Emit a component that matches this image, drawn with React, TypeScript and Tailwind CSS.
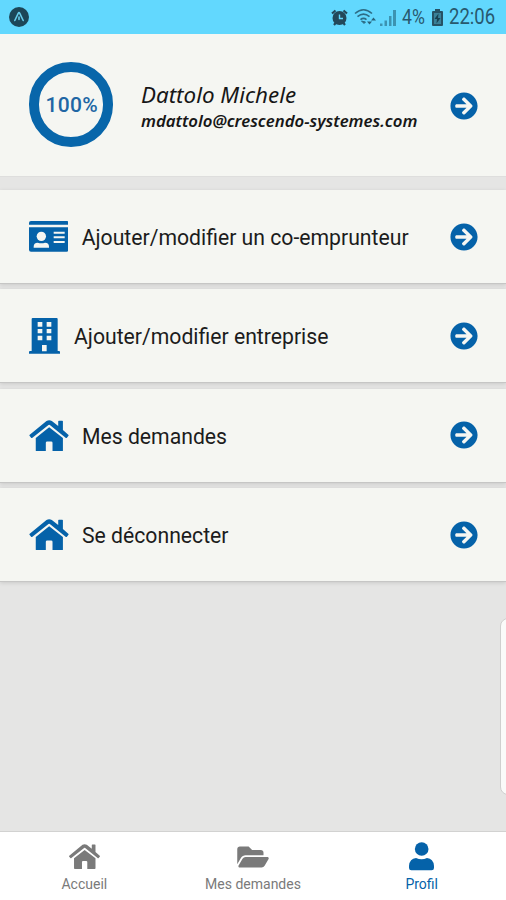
import type { ReactNode } from "react";
import { FaArrowCircleRight, FaFolderOpen } from "react-icons/fa";

function HomeIcon({ className }: { className: string }) {
  return (
    <svg className={className} viewBox="0 0 117 94" fill="currentColor">
      <path d="M1 44 51 3q8-5 16 0l19 15V4q0-2 2-2h10q2 0 2 2v26l16 14q2 2 0 4l-4 5q-2 2-4 0L61 15q-2-2-4 0L9 53q-2 2-4 0l-4-5q-2-2 0-4z" />
      <path d="M19 54 59 22l41 32v37q0 3-3 3H69V68q0-4-4-4H53q-4 0-4 4v26H22q-3 0-3-3z" />
    </svg>
  );
}

function UserIcon() {
  return (
    <svg className="h-[28.3px] w-[25px]" viewBox="0 0 75 85" fill="currentColor">
      <circle cx="38" cy="21" r="20.500" />
      <path d="M0 78V71Q2 50 21 48 38 55 54 48 73 50 75 71v7q0 7-7 7H7q-7 0-7-7z" />
    </svg>
  );
}

function IdCardIcon() {
  return (
    <svg className="h-[30.7px] w-[39.7px]" viewBox="0 0 119 92">
      <path d="M0 11V6q0-6 6-6h107q6 0 6 6v5z" fill="#0562a9" />
      <path d="M0 19h119v67q0 6-6 6H6q-6 0-6-6z" fill="#0562a9" />
      <circle cx="37" cy="46" r="14" fill="#f5f6f2" />
      <path d="M14 80v-3q0-12 12-12 11 4 22 0 12 0 12 12v3zM74 32h33v6H74zM74 46h33v6H74zM74 60h33v6H74z" fill="#f5f6f2" />
    </svg>
  );
}

function BuildingIcon() {
  return (
    <svg className="h-[35.7px] w-[31px]" viewBox="0 0 93 107">
      <path d="M8 3q0-3 3-3h72q3 0 3 3v96h4q3 0 3 3v5H0v-5q0-3 3-3h5z" fill="#0562a9" />
      <path d="M26 12h14v14H26zM53 12h14v14H53zM26 33h14v13H26zM53 33h14v13H53zM26 53h14v14H26zM53 53h14v14H53zM39 81h14v19H39z" fill="#f5f6f2" />
    </svg>
  );
}

function StatusBar() {
  return (
    <header className="flex h-[34px] shrink-0 items-center bg-[#62d8fe] pl-[9px] pr-[10px] text-[#28596e]">
      <svg className="size-5" viewBox="0 0 20 20">
        <circle cx="10" cy="10" r="10" fill="#1c4658" />
        <path d="M5.800 13.500 9.200 6.300q.8-1.300 1.600 0l3.400 7.200M10 10v2.500" fill="none" stroke="#66cbea" strokeWidth="1.600" strokeLinecap="round" />
      </svg>
      <svg className="ml-auto size-[17px]" viewBox="0 0 17 17">
        <circle cx="8.500" cy="9" r="7" fill="#23485a" />
        <path d="M1 4.500 4.500 1.500M16 4.500l-3.500-3M3 16l2-2.500M14 16l-2-2.500" stroke="#23485a" strokeWidth="2.200" />
        <path d="M8.500 5.500v4H12" fill="none" stroke="#62d8fe" strokeWidth="1.400" />
      </svg>
      <svg className="ml-[6px] h-[18px] w-[23px]" viewBox="0 0 23 18" fill="none" stroke="#2d6c85" strokeWidth="1.600">
        <path d="M1 5.500q8.500-7.500 17 0M3.500 8.700q6-5 12 0M6.500 11.700q3-2.500 6 0" />
        <path d="m7.500 13 2.500 2.500 1.500-1.500z" fill="#2d6c85" strokeWidth="1" />
        <path d="m13 13.500 2.500 3 2.500-3zM17 12.500l2.500-3 2.500 3z" fill="#28627a" stroke="none" />
      </svg>
      <svg className="ml-[3px] h-[17px] w-4" viewBox="0 0 16 17" fill="#3c93b1">
        <path d="M0 14.500h2.500V17H0zM4.500 11.500H7V17H4.500zM9 7h2.500v10H9zM13 1h3v16h-3z" />
      </svg>
      <span className="ml-[6px] w-[24px] whitespace-nowrap text-[20.5px]">
        <span className="inline-block origin-left scale-x-[.86]">4%</span>
      </span>
      <svg className="ml-[6px] h-[17px] w-[11px]" viewBox="0 0 11 17">
        <path d="M3 0h5v2h2q1 0 1 1v13q0 1-1 1H1q-1 0-1-1V3q0-1 1-1h2z" fill="#265265" />
        <path d="M2 4h7v11H2z" fill="#3a8199" />
        <path d="M6.500 4.500 2.500 10H5l-.5 4.500L8.500 9H6z" fill="#173f50" />
      </svg>
      <span className="ml-[6px] w-[47px] whitespace-nowrap pt-px text-[21.5px]">
        <span className="inline-block origin-left scale-x-[.86]">22:06</span>
      </span>
    </header>
  );
}

function Arrow() {
  return <FaArrowCircleRight className="ml-auto size-7 text-[#0562a9]" />;
}

function Row({ icon, label, gap = "ml-[13.5px]" }: { icon: ReactNode; label: string; gap?: string }) {
  return (
    <section className="flex h-[94px] shrink-0 items-center border-b border-[#c6c6c5] bg-[#f5f6f2] pl-[28.5px] pr-7 text-[#1c1c1c] shadow-[0_1px_4px_rgba(0,0,0,0.12)]">
      <span className="text-[#0562a9]">{icon}</span>
      <span className={"whitespace-nowrap pt-[3px] text-[21.2px] leading-6 " + gap}>{label}</span>
      <Arrow />
    </section>
  );
}

function Tab({ icon, label, active }: { icon: ReactNode; label: string; active?: boolean }) {
  return (
    <div className={"flex flex-1 flex-col items-center pt-[10px] " + (active ? "text-[#0562a9]" : "text-[#7a7a7a]")}>
      <span className="flex h-[30px] items-center">{icon}</span>
      <span className="mt-[3px] whitespace-nowrap text-[14px] leading-[18px]">{label}</span>
    </div>
  );
}

export default function App() {
  return (
    <div className="relative flex h-[900px] w-[506px] flex-col overflow-hidden bg-[#e5e5e4] font-['Roboto',sans-serif]">
      <StatusBar />
      <section className="flex h-[143px] shrink-0 items-center border-b border-[#dededd] bg-[#f5f6f2] pl-[28.5px] pr-7">
        <div className="mb-[1px] flex size-[84.5px] items-center justify-center rounded-full border-[10.5px] border-[#0866aa] pl-[2px] pt-[3px] text-[21px] font-medium tracking-[0.3px] text-[#2166a4]">
          100%
        </div>
        <div className="ml-7 whitespace-nowrap pt-[5px] font-['Noto_Sans',sans-serif] italic text-[#171717]">
          <div className="text-[22.4px] leading-[26px]">Dattolo Michele</div>
          <div className="text-[16.75px] font-semibold leading-[25px]">mdattolo@crescendo-systemes.com</div>
        </div>
        <div className="ml-auto pt-[2px]">
          <Arrow />
        </div>
      </section>
      <main className="mt-[13px] flex flex-col gap-[5.4px]">
        <Row icon={<IdCardIcon />} label="Ajouter/modifier un co-emprunteur" />
        <Row icon={<BuildingIcon />} label="Ajouter/modifier entreprise" gap="ml-[14.5px]" />
        <Row icon={<HomeIcon className="h-[31.5px] w-10" />} label="Mes demandes" />
        <Row icon={<HomeIcon className="h-[31.5px] w-10" />} label="Se déconnecter" />
      </main>
      <div className="absolute left-[500px] top-[618px] h-[177px] w-8 rounded-lg border-[1.5px] border-[#cfcfce] bg-[#fafaf9]" />
      <nav className="mt-auto flex h-[69.5px] shrink-0 border-t border-[#d2d2d1] bg-white">
        <Tab icon={<HomeIcon className="h-[25px] w-[31px]" />} label="Accueil" />
        <Tab icon={<FaFolderOpen className="h-7 w-8" />} label="Mes demandes" />
        <Tab icon={<UserIcon />} label="Profil" active />
      </nav>
    </div>
  );
}
